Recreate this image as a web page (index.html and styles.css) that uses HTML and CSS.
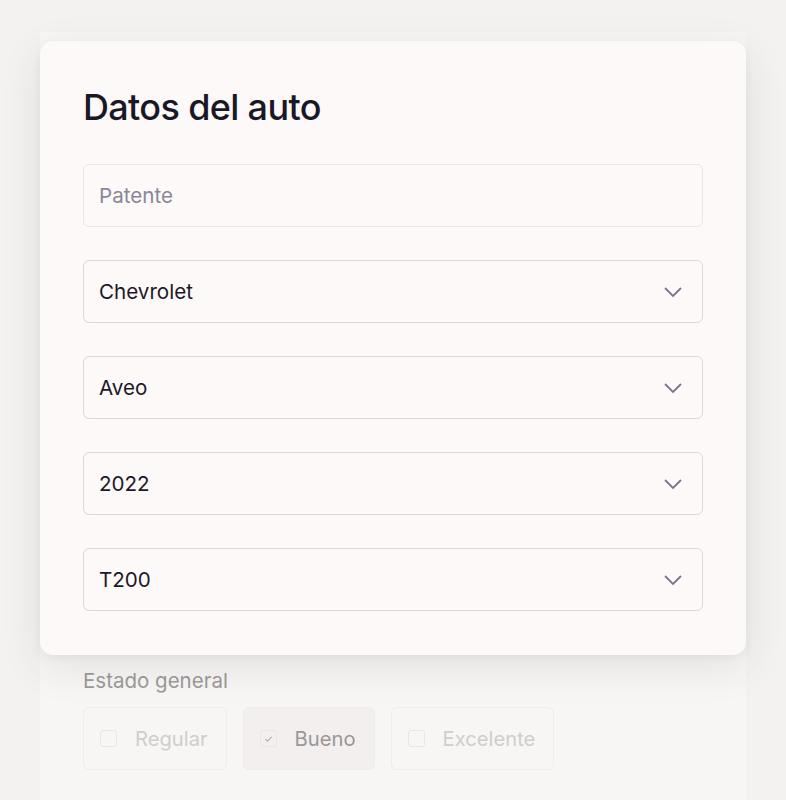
FILE: index.html
```html
<!DOCTYPE html>
<html lang="es">
<head>
<meta charset="utf-8">
<title>Datos del auto</title>
<link rel="stylesheet" href="styles.css">
</head>
<body>
<div class="page">
  <div class="page-card">
    <section class="estado">
      <div class="estado-label">Estado general</div>
      <div class="options">
        <div class="option"><span class="box"></span><span>Regular</span></div>
        <div class="option checked"><span class="box"><svg viewBox="0 0 16 16" width="16" height="16"><path d="M5 8.3l2 2 4-4.3" fill="none" stroke="#b0adad" stroke-width="1.2" stroke-linecap="round" stroke-linejoin="round"/></svg></span><span>Bueno</span></div>
        <div class="option"><span class="box"></span><span>Excelente</span></div>
      </div>
    </section>
  </div>
</div>

<div class="modal">
  <h1 class="title">Datos del auto</h1>
  <div class="fields">
    <div class="field input"><span class="placeholder">Patente</span></div>
    <div class="field select"><span>Chevrolet</span><svg class="chev" viewBox="0 0 20 12" width="20" height="12"><path d="M2 2l8 8 8-8" fill="none" stroke="#7a768b" stroke-width="1.8"/></svg></div>
    <div class="field select"><span>Aveo</span><svg class="chev" viewBox="0 0 20 12" width="20" height="12"><path d="M2 2l8 8 8-8" fill="none" stroke="#7a768b" stroke-width="1.8"/></svg></div>
    <div class="field select"><span>2022</span><svg class="chev" viewBox="0 0 20 12" width="20" height="12"><path d="M2 2l8 8 8-8" fill="none" stroke="#7a768b" stroke-width="1.8"/></svg></div>
    <div class="field select"><span>T200</span><svg class="chev" viewBox="0 0 20 12" width="20" height="12"><path d="M2 2l8 8 8-8" fill="none" stroke="#7a768b" stroke-width="1.8"/></svg></div>
  </div>
</div>
</body>
</html>
```

FILE: styles.css
```css
* { box-sizing: border-box; }

html, body {
  margin: 0;
  height: 100%;
}

body {
  background: #f3f2f1;
  font-family: Inter, "Noto Sans", sans-serif;
  color: #1b1828;
  overflow: hidden;
}

.page {
  padding: 32px 40px 0;
  height: 100%;
}

.page-card {
  background: #f7f6f5;
  height: 100%;
  padding: 637px 43px 0;
}

.estado-label {
  font-size: 20.5px;
  line-height: 24px;
  color: #9b9999;
  margin-bottom: 14px;
}

.options {
  display: flex;
  gap: 16px;
}

.option {
  height: 63px;
  display: flex;
  align-items: center;
  gap: 18px;
  padding: 0 18px 0 16px;
  border: 1px solid #efecea;
  border-radius: 6px;
  font-size: 20.2px;
  color: #d0cdcc;
}

.option.checked {
  background: #f2efee;
  color: #9a9797;
}

.box {
  width: 17px;
  height: 17px;
  border: 1px solid #e9e6e4;
  border-radius: 3px;
  display: flex;
  align-items: center;
  justify-content: center;
}

.box svg { display: block; }

.modal {
  position: absolute;
  left: 40px;
  top: 41px;
  width: 706px;
  height: 614px;
  background: #fcf9f8;
  border-radius: 13px;
  box-shadow: 0 12px 40px rgba(60, 50, 50, 0.10), 0 2px 8px rgba(60, 50, 50, 0.05);
  padding: 44px 43px 44px;
}

.title {
  margin: 0 0 35px;
  font-size: 36px;
  line-height: 44px;
  font-weight: 500;
  letter-spacing: -0.65px;
  color: #1a1727;
}

.fields {
  display: flex;
  flex-direction: column;
  gap: 33px;
}

.field {
  height: 63px;
  border: 1px solid #dcd8d6;
  border-radius: 6px;
  display: flex;
  align-items: center;
  justify-content: space-between;
  padding: 0 19px 0 15px;
  font-size: 20.6px;
  color: #1b1828;
}

.field.input {
  border-color: #ebe7e5;
}

.placeholder {
  color: #8a8699;
}

.chev {
  display: block;
}
```
